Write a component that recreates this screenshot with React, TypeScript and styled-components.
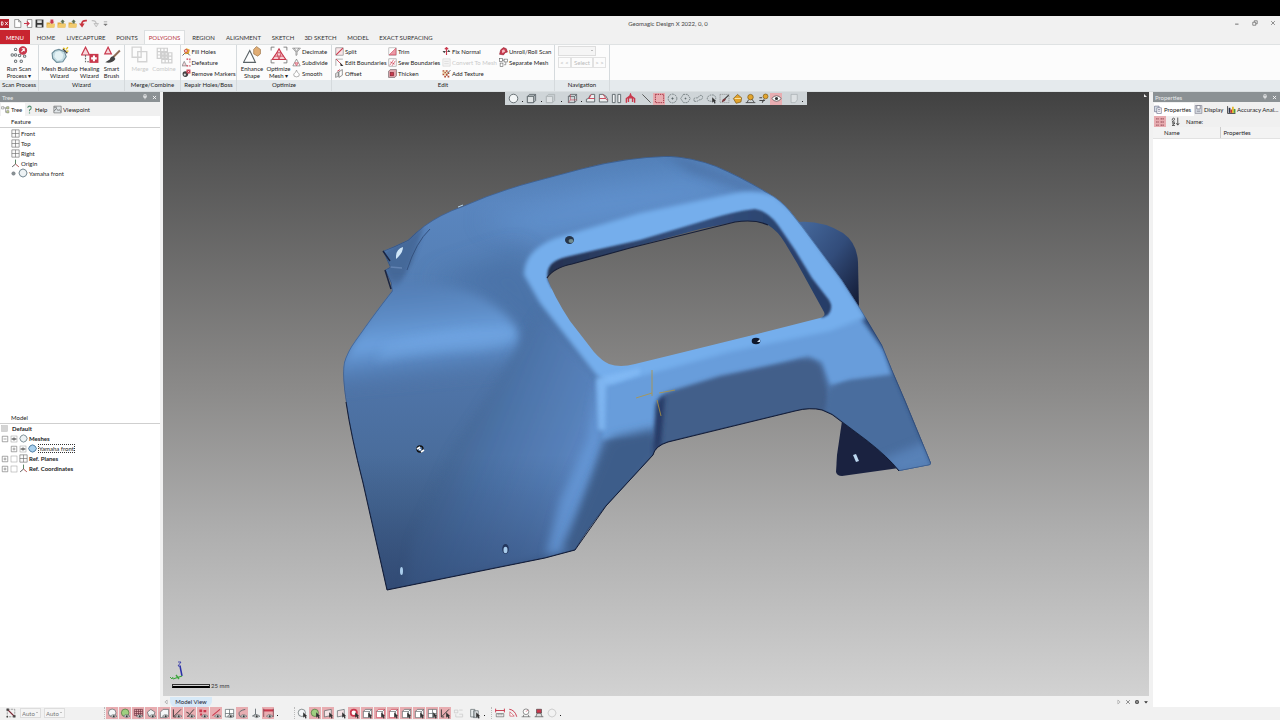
import React from 'react';
import styled, { createGlobalStyle } from 'styled-components';

const Global = createGlobalStyle`
  * { box-sizing: border-box; }
  body {
    margin: 0;
    background: #f1f1f1;
    color: #222;
    font-family: Lato, "Open Sans", sans-serif;
    font-size: 6px;
    line-height: 7px;
  }
  button, select { font: inherit; color: inherit; }
  button { border: 0; padding: 0; background: none; white-space: nowrap; }
`;

/* ---------- icons ---------- */

const G = '#5b6468';
const R = '#c9384c';

const eye = (
  <g>
    <path d="M5 12q4-4.500 9.500 0q-5 4-9.500 0z" fill="#f3f3f3" stroke={G} />
    <circle cx="9.800" cy="12" r="1.500" fill="#333" />
  </g>
);
const cursor = <path d="M9 6v8l2-1.500 1.500 3 1.500-1-1.300-2.500h2.300z" fill="#333" />;

const ART: Record<string, React.ReactNode> = {
  logo: (<g><rect x="0" y="0" width="16" height="16" fill="#b8202c" /><path d="M2.500 5v6h2q2.500-3 0-6zM9 5l5 6M14 5l-5 6" fill="none" stroke="#fff" strokeWidth="1.500" /></g>),
  file: <path d="M3 1h7l4 4v10H3zM10 1v4h4" fill="#fff" stroke="#555" />,
  import: (<g><path d="M6 1h8v14H6z" fill="#fff" stroke="#555" /><path d="M0 8h8M5 4.500l4 3.500-4 3.500" fill="none" stroke={R} strokeWidth="2" /></g>),
  save: (<g><path d="M1 1h14v14H1z" fill="#333" /><path d="M4 2h8v5H4zM4 10h8v4H4z" fill="#ddd" /></g>),
  folderRed: (<g><path d="M1 6h5l2 2h7v7H1z" fill="#e0aa3e" /><path d="M3 9h13l-2 6H1z" fill="#f2cb6d" /><path d="M8 1h5v4h2l-4.500 4L6 5h2z" fill={R} /></g>),
  folderGray: (<g><path d="M1 6h5l2 2h7v7H1z" fill="#e0aa3e" /><path d="M3 9h13l-2 6H1z" fill="#f2cb6d" /><path d="M6 5l4-4 4 4h-2v3H8V5z" fill="#5f7050" /></g>),
  undo: (<g><path d="M14 3Q5 2 5 9" fill="none" stroke="#c7343f" strokeWidth="3" /><path d="M0 8h10l-4.500 7z" fill="#c7343f" /></g>),
  redo: (<g><path d="M3 3Q11 2 11 9" fill="none" stroke="#bdbdbd" strokeWidth="2" /><path d="M7 8h8l-4 6z" fill="#e0e0e0" stroke="#aaa" /></g>),
  more: <path d="M5 5h6M5 9h6l-3 3z" fill="#777" stroke="#777" />,
  scan: (<g fill="#fff" stroke="#6d7478" strokeWidth=".9">
    <circle cx="2" cy="8" r="1.100" /><circle cx="5" cy="3" r="1.100" /><circle cx="5" cy="8" r="1.100" /><circle cx="8.500" cy="8.500" r="1.100" /><circle cx="5" cy="13.500" r="1.100" /><circle cx="10" cy="13.500" r="1.100" /><circle cx="13" cy="9" r="1.100" />
    <circle cx="11.500" cy="4" r="3.300" fill={R} stroke={R} /><path d="M10.200 5.500l2.500-3M10.500 2.500h2.200v2.200" fill="none" stroke="#fff" />
  </g>),
  buildup: (<g><path d="M7 3l5 2 1.500 4.500-3 4.500-5.500.5L1.500 11 1 6.500 3.500 4z" fill="#c3dbe2" stroke="#6c8c99" /><path d="M4 5.500l4-1 3 3-1 4-4 1.500-3-3.500z" fill="#e4f2f5" /><path d="M10.500 2.500l4 4" stroke="#444" strokeWidth="1.300" /><path d="M11 1.500l1.500 1.500M15 1l-1.500 2M15.500 4.500h-2" stroke="#e3bd20" strokeWidth="1.200" /></g>),
  healing: (<g><path d="M4 1l3.500 7H.5z" fill="#f7d8dc" stroke={R} /><path d="M4 8v6h4" fill="none" stroke="#666" strokeDasharray="1.500 1" /><rect x="7.500" y="7" width="8" height="8" fill={R} /><path d="M11.500 8.500v5M9 11h5" stroke="#fff" strokeWidth="1.800" /></g>),
  brush: (<g><path d="M4.500 1l3 6h-6z" fill="#f7d8dc" stroke={R} /><path d="M15 4l-6 6" stroke="#8d6b55" strokeWidth="1.800" /><path d="M9.500 9q-3 0-3.500 3l-4 2.500q6 1.500 9-3z" fill="#444" /></g>),
  merge: (<g fill="none" stroke="#d3d3d3" strokeWidth="1.200"><path d="M1 1h8v4h5v9H6v-4H1z" /><path d="M6 5h3v5H6z" /></g>),
  combine: (<path d="M2 2h9v9H2zM2 5h9M2 8h9M5 2v9M8 2v9M6 6h9v9H6zM6 9h9M6 12h9M9 6v9M12 6v9" fill="none" stroke="#d0d0d0" strokeWidth="1.100" />),
  fill: (<g><path d="M3 6l5-4 6 3-2 7-6 1z" fill="#e2a52e" /><circle cx="7" cy="7" r="2.500" fill="#fff" stroke={R} strokeWidth="1.500" /><path d="M1 15l4-4M10 11l4 4" stroke="#444" strokeWidth="1.500" /></g>),
  defeature: (<g><path d="M4 6l4 8H0z" fill="#f6d4d8" stroke={G} /><path d="M8 2h6v6M8 14h7" fill="none" stroke={R} strokeWidth="2" strokeDasharray="3 2" /></g>),
  markers: (<g><circle cx="6" cy="9" r="5" fill="#444" /><circle cx="5" cy="10" r="2" fill="#ddd" /><path d="M8 1h7v7H8z" fill={R} /><path d="M10 3l3 3M13 3l-3 3" stroke="#fff" /></g>),
  enhance: (<g><path d="M6 4l5 10.500H.5z" fill="#fff" stroke={G} /><path d="M9.500 3l2.500-2.500 3.500 2.500v4L13 9l-3.500-2z" fill="#e1ad74" stroke="#9a7145" strokeWidth=".6" /></g>),
  optimize: (<g><path d="M1 4V1h3M12 1h3v3M15 12v3h-3M4 15H1v-3" fill="none" stroke="#777" strokeWidth=".8" /><path d="M8 2.500l2 3.500 4 6H2l4-6z" fill="#f6ccd2" stroke={R} /><path d="M6 6h4l-2 6zM4 9h8" fill="none" stroke={R} strokeWidth=".7" /></g>),
  decimate: <path d="M1 2h14L9 9v5l-2 1V9zM4 2l4 6 4-6" fill="#f4f4f4" stroke="#666" />,
  subdivide: (<g><path d="M8 2l6.500 12h-13z" fill="#fff" stroke="#555" /><path d="M5 8.500h6L8 14z" fill="#f2bcc4" stroke={R} /></g>),
  smooth: <path d="M8 2q1 4 5 7 1 5-5 5t-5-5q4-3 5-7z" fill="#fff" stroke="#777" />,
  split: (<g><rect x="1.500" y="1.500" width="13" height="13" fill="#f8e6e8" stroke="#777" /><path d="M2 14L14 2" stroke={R} strokeWidth="1.800" /></g>),
  editB: (<g><path d="M1.500 14V2H14" fill="none" stroke="#777" /><path d="M2 2l10 10" stroke={R} strokeWidth="1.500" /><path d="M9 8l6 6h-5z" fill="#333" /></g>),
  offset: (<g><path d="M1 8l5-3v8l-5 2z" fill="#ddd" stroke="#666" /><path d="M7 5l6-4v10l-6 4z" fill="#fff" stroke="#444" /><path d="M4 4l5-3" stroke={R} strokeWidth="1.500" /></g>),
  trim: (<g><rect x="1.500" y="1.500" width="13" height="13" fill="#fff" stroke="#999" /><path d="M14 2v12H2z" fill="#eb9aa6" stroke={R} /></g>),
  sew: (<g><rect x="1.500" y="1.500" width="13" height="13" fill="#fff" stroke="#888" /><path d="M3 13L10 3M7 14l6-9M4 7l8 4" stroke={R} strokeWidth="1.200" /></g>),
  thicken: (<g><path d="M1 4l3-3h11v11l-3 3H1z" fill="#e2a5ad" stroke="#555" /><rect x="4" y="6" width="6" height="6" fill={R} stroke="#7d1d2b" /></g>),
  fix: (<g><path d="M8 1v13M5 4l3-3 3 3" fill="none" stroke={R} strokeWidth="2" /><path d="M1 7h6l-3 4zM9 9h6l-3-4z" fill="#444" /></g>),
  convert: <path d="M1.500 1.500h13v13h-13zM4 6h8M4 10h8" fill="#f4f4f4" stroke="#d0d0d0" />,
  texture: (<g><path d="M1 2h3v3H1zM7 2h3v3H7zM4 5h3v3H4zM10 6h3v3h-3zM1 8h3v3H1zM7 9h3v3H7zM4 12h3v3H4zM10 12h3v3h-3z" fill="#b04a36" /><path d="M4 2h3v3H4zM1 5h3v3H1zM7 6h3v3H7zM4 8h3v3H4z" fill="#edd5a0" /><path d="M9 8l6-6" stroke="#444" strokeWidth="1.500" /></g>),
  unroll: (<g><path d="M1 13l2-8 5-4 5 2 2 6-4 1-3 4z" fill={R} stroke="#8d2230" /><path d="M5 6l4-2 2 4-5 3z" fill="#f3bcc3" /></g>),
  separate: (<g fill="#fff" stroke="#555"><rect x="1" y="1" width="5" height="5" /><rect x="9" y="2" width="6" height="5" /><rect x="2" y="9" width="5" height="6" /><path d="M6 4h3M9 12h3V7" /></g>),
  sphere: <circle cx="8" cy="8" r="6.200" fill="#f3f6f7" stroke={G} strokeWidth="1.300" />,
  mesh: <path d="M8 1.500l4.500 2 2 4.500-2 4.500-4.500 2-4.500-2-2-4.500 2-4.500z" fill="#eef3f5" stroke="#5f7580" strokeWidth="1.400" />,
  meshBlue: <path d="M8 1.500l4.500 2 2.500 4.500-2.500 4.500-4.500 2-4.500-2L1 8l2.500-4.500z" fill="#a9d0ee" stroke="#396c95" strokeWidth="1.500" />,
  cube: (<g stroke={G} strokeWidth="1.200"><path d="M2 5l3-3h9v9l-3 3H2z" fill="#a9b0b4" /><path d="M2 5h9v9H2z" fill="#dfe3e4" /><path d="M11 5l3-3" /></g>),
  cubeGray: (<g stroke="#aab0b3" strokeWidth="1.200"><path d="M2 5l3-3h9v9l-3 3H2z" fill="#c9cfd2" /><path d="M2 5h9v9H2z" fill="#dfe3e5" /></g>),
  cubeRed: (<g fill="none" stroke={G} strokeWidth="1.200"><path d="M2 5l3-3h9v9l-3 3H2zM2 5h9v9M11 5l3-3" /><path d="M5 2v8h9M5 10l-3 4" stroke={R} strokeWidth=".8" /></g>),
  halfL: (<g fill="none" strokeWidth="1.300"><path d="M2 13h12V2H9Q7 3 5 8L2 9z" fill="#eceff0" stroke={G} /><path d="M5 8h9M9 2L6 8" stroke={R} /></g>),
  halfR: (<g fill="none" strokeWidth="1.300"><path d="M2 13h12V9q-2-6-7-7H2z" fill="#eceff0" stroke={G} /><path d="M2 8h9q1 2 3 2M7 2q3 2 4 6" stroke={R} /></g>),
  pair: <path d="M2 2h4v12H2zM10 2h4v12h-4z" fill="#f2f4f5" stroke={G} strokeWidth="1.300" />,
  people: (<g fill="none" stroke={R} strokeWidth="2"><path d="M2 14V8l3-2v7M14 14V8l-3-2v7" /><path d="M6 7l2-5 2 5z" fill={R} /></g>),
  line: <path d="M2 2l12 12" stroke="#444" strokeWidth="1.200" />,
  rectSel: <path d="M2 2h12v12H2z" fill="none" stroke="#9c2638" strokeWidth="1.300" strokeDasharray="2 1.300" />,
  circleSel: (<g fill="none" stroke={G}><circle cx="8" cy="8" r="6.300" strokeDasharray="3 1" /><circle cx="8" cy="8" r="1" fill={G} /></g>),
  polySel: (<g fill="none" stroke={G}><path d="M5 2h6l4 6-4 6H5L1 8z" strokeDasharray="2.500 1" /><circle cx="8" cy="8" r=".8" fill={G} /></g>),
  lasso: <path d="M2 12q-2-5 2-5 4 1 5-3 5-2 5 3-1 3-5 3-3 3-7 2z" fill="none" stroke={G} strokeDasharray="2.500 1" />,
  lasso2: (<g><path d="M8 12q-7 0-6-5 2-5 9-4 4 2 3 6" fill="none" stroke={G} strokeDasharray="2.500 1" />{cursor}</g>),
  paint: (<g><path d="M1.500 2h13v12h-13z" fill="none" stroke="#888" strokeDasharray="2 1" /><path d="M14 3L8 9" stroke="#333" strokeWidth="1.500" /><path d="M9 8q-4 0-5 5 4 1 6-4z" fill="#7a3a3e" /></g>),
  bucket: (<g><path d="M2 8l6-6 6 5-1 6-7 2z" fill="#e0a22b" stroke="#7c5714" /><path d="M4 8h9" stroke="#fae0a0" strokeWidth="1.500" /></g>),
  stamp: (<g><circle cx="8" cy="6" r="4" fill="#e2a52e" stroke="#7c5714" /><path d="M1 14h14M5 10l-2 4M10 9l3 4" stroke="#444" strokeWidth="1.300" /></g>),
  wand: (<g><circle cx="11" cy="5" r="3.500" fill="#e2a52e" stroke="#7c5714" /><path d="M2 7h4M2 11h8M6 14l3-5" stroke="#444" strokeWidth="1.500" /></g>),
  eye: (<g><path d="M1 8q7-8 14 0q-7 8-14 0z" fill="#fff" stroke="#444" /><circle cx="8" cy="8" r="2.300" fill="#333" /></g>),
  page: <path d="M3 2h9v8l-3 4H3z" fill="#dde1e3" stroke="#a5acaf" />,
  plane: <path d="M1.500 1.500h13v13h-13zM8 1.500v13M1.500 8h13" fill="#fafafa" stroke="#6c6c6c" strokeWidth="1.100" />,
  origin: (<g fill="none" strokeWidth="1.500"><path d="M8 9V1" stroke="#3b6f4a" /><path d="M8 9l-6 5" stroke="#444" /><path d="M8 9l6 5" stroke="#a23a3a" /></g>),
  tree: (<g fill="#fff" stroke="#777"><path d="M1 3h4v4H1z" /><path d="M5 5h3v8h2M8 5h2" fill="none" /><path d="M10 3h4v4h-4zM10 10h4v4h-4z" fill="#cbdc8c" /></g>),
  help: (<g><path d="M5 5q0-3 3-3t3 3-3 4v2" fill="none" stroke="#4f8b6c" strokeWidth="1.800" /><circle cx="8" cy="14" r="1.200" fill="#4d9a76" /></g>),
  view: (<g><path d="M1.500 2h13v12h-13z" fill="#dfe4e7" stroke="#555" /><path d="M2 11l4-5 3 4 2-2 3 4M2 4h5" stroke="#444" fill="none" /></g>),
  props: (<g><path d="M1 2h8v10H1z" fill="#dae5ea" stroke="#557" /><path d="M5 5h8v10H5z" fill="#fff" stroke="#557" /><path d="M7 8h4M7 11h4" stroke="#557" /></g>),
  display: (<g><path d="M2 1h12v14H2z" fill="#d5dae2" stroke="#778" /><path d="M5 1h6v6H5zM5 11h6" fill="#fff" stroke="#556" /></g>),
  accuracy: (<g><path d="M1 2v13h14" fill="none" stroke="#333" strokeWidth="1.500" /><path d="M3 5h3v9H3z" fill="#28324a" /><path d="M6 8h3v6H6z" fill="#c6332e" /><path d="M9 3h3v11H9z" fill="#e6b520" /><path d="M12 7h3v7h-3z" fill="#4c9b3c" /></g>),
  categories: <path d="M2 3h4M2 8h4M2 13h4M9 3h5M9 8h5M9 13h5" stroke="#7a2836" strokeWidth="1.500" strokeDasharray="2 1" />,
  sort: (<g fill="none" stroke="#333" strokeWidth="1.400"><path d="M2 6q0-4 2.500-4T6 5L2 9h5M2 11h5l-5 4h5" /><path d="M12 1v13M9.500 11l2.500 3.500 2.500-3.500" /></g>),
  sphereEye: (<g><circle cx="7.500" cy="7" r="5.500" fill="#f5f7f8" stroke={G} />{eye}</g>),
  greenEye: (<g><circle cx="7.500" cy="7" r="5.500" fill="#9fcf80" stroke="#49713a" />{eye}</g>),
  gridEye: (<g><path d="M2 2h12v9H2zM2 5h12M2 8h12M5 2v9M8 2v9M11 2v9" fill="none" stroke="#6e3340" />{eye}</g>),
  polyEye: (<g><path d="M7 2l6 4-2 6H4L2 6z" fill="#eef1f2" stroke={G} />{eye}</g>),
  solidEye: (<g><path d="M2 6l4-4h8v8l-3 4H2z" fill="#f5f7f8" stroke={G} />{eye}</g>),
  sketchEye: (<g><path d="M2 2v11h4M3 12L13 2" fill="none" stroke="#333" strokeWidth="1.300" />{eye}</g>),
  sketch3Eye: (<g><path d="M13 2L5 11M2 6l4 2M3 12h5" fill="none" stroke="#333" strokeWidth="1.300" />{eye}</g>),
  pointEye: (<g><path d="M2 2h4v4H2zM8 3h4v3H8zM3 8h3v3H3z" fill={R} />{eye}</g>),
  lineEye: (<g><path d="M2 11L13 2" stroke={R} strokeWidth="1.500" />{eye}</g>),
  planeEye: (<g><path d="M2 2h12v11H2zM8 2v11M2 8h12" fill="#fff" stroke={G} />{eye}</g>),
  curveEye: (<g><path d="M12 2Q2 4 3 9t4 4" fill="none" stroke={G} strokeWidth="1.300" />{eye}</g>),
  coordEye: (<g><path d="M8 1v8l-5 3M8 9l5 3" fill="none" stroke={G} strokeWidth="1.200" />{eye}</g>),
  dimEye: (<g><path d="M1 2h14v3H1z" fill={R} /><path d="M1 1v12M15 1v12" stroke="#6e3340" />{eye}</g>),
  sphereCur: (<g><circle cx="7" cy="7" r="5.300" fill="#f5f7f8" stroke={G} />{cursor}</g>),
  greenCur: (<g><circle cx="7" cy="7" r="5.300" fill="#9fcf80" stroke="#49713a" />{cursor}</g>),
  faceCur: (<g><path d="M2 4l10-2v9L2 13z" fill="#f4e4e6" stroke={G} />{cursor}</g>),
  redCur: (<g><circle cx="7" cy="7" r="4.500" fill="#fff" stroke={R} strokeWidth="2.500" />{cursor}</g>),
  boxCur: (<g><path d="M2 5l3-3h9v9l-3 3H2z" fill="#fff" stroke={G} /><path d="M2 5h9v9M11 5l3-3" fill="none" stroke={G} />{cursor}</g>),
  boxRedCur: (<g><path d="M2 5l3-3h9v9l-3 3H2z" fill="#fff" stroke={R} /><path d="M2 5h9v9M11 5l3-3" fill="none" stroke={G} />{cursor}</g>),
  planeCur: (<g><path d="M2 2h12v12H2zM8 2v12M2 8h12" fill="#fff" stroke={G} />{cursor}</g>),
  sketchCur: (<g><path d="M2 2v11h4M3 12L13 2" fill="none" stroke="#333" strokeWidth="1.300" />{cursor}</g>),
  grayCur: <path d="M2 3h5v4H2zM9 3h5M9 9h5v4H4V9" fill="none" stroke="#c7c7c7" />,
  copyCur: (<g><path d="M1 2h6v11H1zM5 4h7v10H5z" fill="#edf1f2" stroke={G} />{cursor}</g>),
  dist: (<g><path d="M1 4h14M1 1v6M15 1v6" stroke={R} strokeWidth="1.500" /><path d="M2 9h12v5H2zM5 9v3M8 9v3M11 9v3" fill="#fff" stroke="#555" /></g>),
  angle: (<g><path d="M2 2q9 1 12 12" fill="none" stroke={R} strokeWidth="1.500" /><path d="M3 6v7h7z" fill="#fff" stroke={R} /></g>),
  radius: (<g><circle cx="8" cy="6" r="4.500" fill="#fff" stroke="#555" /><path d="M8 6l3-3" stroke={R} /><path d="M1 14h14M4 11v3M12 11v3" stroke="#555" /></g>),
  section: (<g><path d="M1 14h14M3 14l2-6h6l2 6" fill="#ddd" stroke="#444" /><path d="M4 2h8v6H4z" fill={R} stroke="#444" /></g>),
  ring: <path d="M8 1.500l4.500 2 2 4.500-2 4.500-4.500 2-4.500-2-2-4.500 2-4.500z" fill="#f2f2f2" stroke="#c4c4c4" strokeWidth="1.300" />,
  filter: (<g><path d="M3 3v10h10V3z" fill="none" stroke="#888" strokeDasharray="3 1" /><path d="M3 3l10 10" fill="none" stroke="#7d2b38" strokeWidth="1.500" /><path d="M2 2h3v3H2zM11 11h3v3h-3zM2 12h2v2H2z" fill="#444" /></g>),
  check: <rect x="2" y="2" width="12" height="12" fill="#fff" stroke="#999" />,
  checkEye: (<g><rect x="2" y="2" width="12" height="12" fill="#fff" stroke="#999" /><path d="M3 8q5-5 10 0q-5 5-10 0z" fill="#ddd" stroke="#444" /><circle cx="8" cy="8" r="1.500" fill="#222" /></g>),
  block: <rect x="1" y="1" width="14" height="14" fill="#d4d4d4" stroke="#bbb" />,
  plus: <path d="M2.500 2.500h11v11h-11zM5 8h6M8 5v6" fill="#fff" stroke="#777" strokeWidth="1.300" />,
  minus: <path d="M2.500 2.500h11v11h-11zM5 8h6" fill="#fff" stroke="#777" strokeWidth="1.300" />,
  dot: <circle cx="8" cy="8" r="4" fill="#8a9494" stroke="#667" />,
  blank: null,
  pin: <path d="M5 2h6v6H5zM3 8h10M8 8v6" fill="none" stroke="#fff" strokeWidth="1.700" />,
  close: <path d="M3 3l10 10M13 3L3 13" stroke="#fff" strokeWidth="2.600" />,
  thinClose: <path d="M3 3l10 10M13 3L3 13" stroke="#444" strokeWidth="1.500" />,
  min: <path d="M3 11h9" stroke="#444" strokeWidth="2" />,
  restore: <path d="M2 6h8v8H2zM6 6V2h8v8h-4" fill="none" stroke="#444" strokeWidth="1.500" />,
  left: <path d="M11 3v10L5 8z" fill="#fff" stroke="#555" />,
  right: <path d="M5 3v10l6-5z" fill="#fff" stroke="#555" />,
  down: <path d="M3 6h10l-5 6z" fill="#333" />,
  disc: (<g><circle cx="8" cy="8" r="5.500" fill="#444" /><path d="M5 8h6" stroke="#fff" strokeWidth="2" /></g>),
};

const Svg = styled.svg<{ $s: number }>`
  display: block;
  flex: none;
  width: ${(p) => p.$s}px;
  height: ${(p) => p.$s}px;
`;
const Icon = ({ n, s = 9 }: { n: string; s?: number }) => (
  <Svg $s={s} viewBox="0 0 16 16" aria-hidden="true">{ART[n]}</Svg>
);

/* ---------- frame ---------- */

const Shell = styled.div`
  display: flex;
  flex-direction: column;
  min-height: 100vh;
  border-top: 16px solid #000;
`;
const TitleBar = styled.header`
  display: grid;
  grid-template-columns: 1fr auto 1fr;
  align-items: center;
  height: 14px;
  padding: 0 4px 0 0;
`;
const QuickAccess = styled.div`
  display: flex;
  gap: 2px;
  button:first-child { margin-right: 2px; }
`;
const Title = styled.h1`
  margin: 0 0 0 60px;
  font-size: 6px;
  font-weight: 400;
  color: #444;
`;
const WindowButtons = styled.div`
  display: flex;
  justify-content: flex-end;
  gap: 12px;
`;

const TabStrip = styled.nav`
  display: flex;
  height: 14px;
`;
const Tab = styled.button<{ $kind?: 'menu' | 'active'; $w: number }>`
  width: ${(p) => p.$w}px;
  color: ${(p) => (p.$kind === 'menu' ? '#fff' : p.$kind === 'active' ? '#b8323e' : '#333')};
  background: ${(p) => (p.$kind === 'menu' ? '#c8242f' : p.$kind === 'active' ? '#fcfcfc' : 'none')};
  border: ${(p) => (p.$kind === 'active' ? '1px solid #dcdfe0' : '0')};
  border-bottom: 0;
`;

const Ribbon = styled.div`
  display: flex;
  height: 47px;
  border-top: 1px solid #dfe2e3;
  background: linear-gradient(#fcfcfc 35px, #e5eaed 35px);
`;
const Group = styled.section<{ $w: number }>`
  display: flex;
  flex-direction: column;
  width: ${(p) => p.$w}px;
  border-right: 1px solid #d5dadd;
`;
const GroupBody = styled.div`
  display: flex;
  justify-content: center;
  height: 35px;
  padding-top: 1px;
`;
const GroupLabel = styled.h2`
  margin: 0;
  height: 9px;
  line-height: 9px;
  font-size: 6px;
  font-weight: 400;
  text-align: center;
  white-space: nowrap;
`;
const BigButton = styled.button<{ $w: number }>`
  display: flex;
  flex-direction: column;
  align-items: center;
  width: ${(p) => p.$w}px;
  height: 33px;
  gap: 1px;
  &:disabled { color: #c9c9c9; }
`;
const Stack = styled.div<{ $w: number }>`
  width: ${(p) => p.$w}px;
`;
const SmallButton = styled.button`
  display: flex;
  align-items: center;
  gap: 1px;
  height: 11px;
  &:disabled { color: #cacaca; }
`;

const Nav = styled.div`
  display: flex;
  flex-direction: column;
  gap: 1px;
  width: 48px;
`;
const Picker = styled.span<{ $w: number }>`
  display: flex;
  align-items: center;
  width: ${(p) => p.$w}px;
  height: 10px;
  border: 1px solid #ddd;
  background: #f5f5f5;
  color: #777;
  select {
    flex: 1;
    min-width: 0;
    padding: 0 0 0 1px;
    border: 0;
    background: none;
    appearance: none;
  }
  &::after {
    content: "";
    margin-right: 2px;
    border: 1px solid transparent;
    border-top-color: #888;
  }
`;
const NavRow = styled.div`
  display: flex;
`;
const NavButton = styled.button<{ $w: number }>`
  width: ${(p) => p.$w}px;
  height: 11px;
  border: 1px solid #e2e2e2;
  &:disabled { color: #bbb; }
`;

/* ---------- docks ---------- */

const Work = styled.main`
  display: flex;
  flex: 1;
  border-top: 1px solid #dadfe1;
`;
const Dock = styled.aside<{ $w: number }>`
  display: flex;
  flex-direction: column;
  flex: none;
  width: ${(p) => p.$w}px;
  background: #fff;
`;
const DockTitle = styled.div`
  display: flex;
  align-items: center;
  gap: 4px;
  height: 10px;
  padding: 0 3px 0 2px;
  background: #8b9194;
  color: #e8eaeb;
`;
const DockName = styled.span`
  flex: 1;
`;
const DockTabs = styled.div`
  display: flex;
  height: 14px;
  padding: 1px 0 0 1px;
  background: #f0f0f0;
`;
const DockTab = styled.button<{ $on?: boolean; $w: number }>`
  display: flex;
  align-items: center;
  gap: 1px;
  width: ${(p) => p.$w}px;
  background: ${(p) => (p.$on ? '#fff' : 'none')};
`;
const TreeSection = styled.section`
  flex: 1 1 0;
`;
const TreeHead = styled.h3`
  margin: 0;
  height: 12px;
  padding-left: 11px;
  border-bottom: 1px solid #cfcfcf;
  font-size: 6px;
  font-weight: 400;
  line-height: 11px;
`;
const List = styled.ul`
  margin: 0;
  padding: 0;
  list-style: none;
`;
const Row = styled.li<{ $in: number; $bold?: boolean }>`
  display: flex;
  align-items: center;
  gap: 1px;
  height: 10px;
  padding-left: ${(p) => p.$in}px;
  font-weight: ${(p) => (p.$bold ? 700 : 400)};
`;
const Selected = styled.span`
  border: 1px dotted #333;
`;
const PropsBar = styled.div`
  display: flex;
  align-items: center;
  gap: 3px;
  height: 11px;
  padding-left: 1px;
  background: #f0f0f0;
`;
const PropName = styled.span`
  margin-left: 3px;
`;
const PropTable = styled.table`
  width: 100%;
  border-collapse: collapse;
  background: #f3f3f3;
  th {
    height: 11px;
    padding: 0 0 0 11px;
    border-bottom: 1px solid #e2e2e2;
    font-weight: 400;
    text-align: left;
  }
  th + th { padding-left: 3px; border-left: 1px solid #ccc; width: 60px; }
`;

/* ---------- centre ---------- */

const Centre = styled.div`
  display: flex;
  flex-direction: column;
  flex: 1;
  min-width: 0;
  margin: 0 4px 0 3px;
`;
const Viewport = styled.div`
  position: relative;
  flex: 1;
  min-height: 300px;
  overflow: hidden;
  background: linear-gradient(#414141, #535353 10%, #8b8a89 49%, #adadad 72%, #d2d2d2);
`;
const Scene = styled.svg`
  position: absolute;
  inset: 0;
  width: 100%;
  height: 100%;
`;
const FloatBar = styled.div`
  position: absolute;
  top: 0;
  left: 50%;
  transform: translateX(-50%);
  display: flex;
  align-items: center;
  width: 302px;
  height: 13px;
  padding-left: 2px;
  background: #cfd5d8;
`;
const Corner = styled.div`
  position: absolute;
  top: 2px;
  right: 2px;
  border-left: 3px solid #eee;
  border-top: 3px solid transparent;
`;
const Scale = styled.div`
  position: absolute;
  left: 9px;
  bottom: 7px;
  display: flex;
  align-items: center;
  gap: 1px;
  color: #333;
`;
const ScaleBar = styled.div`
  width: 38px;
  height: 4px;
  border: 1px solid #333;
  border-bottom: 2px solid #000;
`;
const ViewTabs = styled.div`
  display: flex;
  align-items: center;
  height: 11px;
  gap: 3px;
  color: #223;
`;
const ViewTab = styled.button`
  height: 10px;
  width: 42px;
  margin-left: -2px;
  background: #d7e9f7;
  border-radius: 0 0 6px 6px;
`;
const Spacer = styled.div`
  flex: 1;
`;

/* ---------- tool buttons ---------- */

const Tool = styled.button<{ $on?: boolean; $w?: number }>`
  display: flex;
  align-items: center;
  justify-content: center;
  flex: none;
  width: ${(p) => p.$w ?? 13}px;
  height: 12px;
  background: ${(p) => (p.$on ? '#e8adb1' : 'none')};
  background-clip: padding-box;
  border-right: ${(p) => (p.$on ? '1px solid transparent' : '0')};
`;
const MoreTool = styled(Tool)`
  align-items: flex-end;
  padding-bottom: 3px;
  &::after {
    content: "";
    width: 1px;
    height: 1px;
    background: #222;
  }
`;
const Status = styled.footer`
  display: flex;
  align-items: center;
  height: 13px;
  padding: 0 0 1px 5px;
`;
const StatusSet = styled.div<{ $w: number }>`
  display: flex;
  align-items: center;
  width: ${(p) => p.$w}px;
  gap: 3px;
`;
const Tools = styled.div<{ $w: number }>`
  display: flex;
  width: ${(p) => p.$w}px;
  padding-left: 1px;
  border-left: 1px dotted #bbb;
`;

const Small = ({ n, label, disabled }: { n: string; label: string; disabled?: boolean }) => (
  <SmallButton disabled={disabled}><Icon n={n} />{label}</SmallButton>
);
const Big = ({ n, a, b, w, disabled }: { n: string; a: string; b?: string; w: number; disabled?: boolean }) => (
  <BigButton $w={w} disabled={disabled}>
    <Icon n={n} s={18} />
    <span>{a}{b && <><br />{b}</>}</span>
  </BigButton>
);

const TABS: [string, number][] = [
  ['HOME', 32], ['LIVECAPTURE', 48], ['POINTS', 34], ['POLYGONS', 41], ['REGION', 37], ['ALIGNMENT', 43],
  ['SKETCH', 36], ['3D SKETCH', 39], ['MODEL', 36], ['EXACT SURFACING', 60],
];
const QUICK = ['logo', 'file', 'import', 'save', 'folderRed', 'folderGray', 'folderGray', 'undo', 'redo', 'more'];

const FLOAT: [string, number, boolean?][] = [
  ['sphere', 13], ['.', 5], ['cube', 13], ['.', 6], ['cubeGray', 13], ['.', 9], ['cubeRed', 13], ['.', 5],
  ['halfL', 13], ['halfR', 13], ['pair', 13], ['people', 14], ['blank', 3], ['line', 13], ['rectSel', 13, true],
  ['circleSel', 13], ['polySel', 13], ['lasso', 13], ['lasso2', 13], ['paint', 13], ['bucket', 13], ['stamp', 13],
  ['wand', 13], ['eye', 13, true], ['blank', 5], ['page', 12], ['.', 5],
];
const SHOW: [string, boolean][] = [
  ['sphereEye', true], ['greenEye', true], ['gridEye', true], ['polyEye', true], ['solidEye', true], ['sketchEye', true],
  ['sketch3Eye', true], ['pointEye', true], ['lineEye', true], ['planeEye', false], ['curveEye', true],
  ['coordEye', false], ['dimEye', true],
];
const PICK: [string, boolean][] = [
  ['sphereCur', false], ['greenCur', true], ['faceCur', true], ['faceCur', false], ['redCur', true], ['boxCur', true],
  ['boxRedCur', true], ['boxRedCur', true], ['boxCur', true], ['boxCur', true], ['planeCur', true], ['sketchCur', true],
  ['grayCur', false],
];

const BODY =
  'M387 590 L363 483 Q351 436 346 402 Q342 378 344 363 Q347 352 355 341 L370 320 Q384 301 392 291 L391 283 L385 270 L390 267 L383 251 L395 246 L408 240 Q415 233 424 226 Q440 214 463 206 Q497 191 535 181 L580 169 Q625 157 668 156 Q692 157 716 166 Q744 178 768 193 Q781 200 790 211 L802 226 L842 280 L860 308 L882 345 L893 372 L905 400 L931 463 L930 465 L899 471 Q888 457 866 440 L842 422 Q832 413 822 410 Q810 407 795 411 L700 434 L668 442 Q655 446 653 455 L630 480 L606 506 Q587 530 575 550 L545 558 L387 590 Z';
const HOLE =
  'M547 277 Q553 268 572 264 L630 248 L700 229 L735 222 Q755 219 768 225 Q778 231 785 243 L797 263 L824 312 Q826 316 820 318 L753 335 L680 353 L635 364 Q620 368 609 364 Q602 361 594 352 L570 321 Q553 295 547 277 Z';
const LIP =
  'M548 280 Q544 262 566 257 L600 249 L640 240 L700 222 Q735 211 755 209 Q768 211 778 225 L795 250 L812 278 L829 300 Q834 308 828 315 L822 318 L797 275 L765 235 L700 240 L565 282 L552 288 Z';
const RIM =
  'M524 275 Q524 250 556 238 L640 213 L735 193 Q760 189 775 196 L795 214 L842 280 L866 318 L830 331 L730 352 L612 384 L597 376 L540 303 Z';

const Part = () => (
  <Scene viewBox="163 92 986 604" role="img" aria-label="Yamaha front mesh">
    <defs>
      <clipPath id="body"><path d={BODY} /></clipPath>
      <mask id="cut"><rect x="163" y="92" width="986" height="604" fill="#fff" /><path d={HOLE} fill="#000" /></mask>
      <linearGradient id="base" x1="0" y1="0" x2="0" y2="1">
        <stop offset="0" stopColor="#5280b8" /><stop offset=".12" stopColor="#5a86bf" /><stop offset=".3" stopColor="#547eb4" />
        <stop offset=".55" stopColor="#4e73a6" /><stop offset=".8" stopColor="#466894" /><stop offset="1" stopColor="#3b567f" />
      </linearGradient>
      <linearGradient id="flap" x1="0" y1="0" x2=".9" y2="1">
        <stop offset="0" stopColor="#466a9e" /><stop offset=".5" stopColor="#324c7a" /><stop offset="1" stopColor="#131b35" />
      </linearGradient>
      <linearGradient id="bump" gradientUnits="userSpaceOnUse" x1="440" y1="288" x2="450" y2="385">
        <stop offset="0" stopColor="#5580b8" /><stop offset=".25" stopColor="#5d8cc6" /><stop offset=".52" stopColor="#6ba0de" /><stop offset=".7" stopColor="#5a88c2" /><stop offset="1" stopColor="#4d75aa" stopOpacity="0" />
      </linearGradient>
      <linearGradient id="side" gradientUnits="userSpaceOnUse" x1="440" y1="445" x2="580" y2="500">
        <stop offset="0" stopColor="#42648f" /><stop offset=".35" stopColor="#4d74a9" /><stop offset=".75" stopColor="#5983bd" /><stop offset="1" stopColor="#6090ce" />
      </linearGradient>
      <linearGradient id="low" x1="0" y1="0" x2="0" y2="1">
        <stop offset="0" stopColor="#2c446e" stopOpacity="0" /><stop offset="1" stopColor="#2c446e" stopOpacity=".7" />
      </linearGradient>
      <linearGradient id="lip" x1="0" y1="0" x2="1" y2="0">
        <stop offset="0" stopColor="#24304f" /><stop offset=".5" stopColor="#34507e" /><stop offset="1" stopColor="#263c66" />
      </linearGradient>
      <filter id="b1" x="-20%" y="-20%" width="140%" height="140%"><feGaussianBlur stdDeviation="1" /></filter>
      <filter id="b2" x="-50%" y="-20%" width="200%" height="140%"><feGaussianBlur stdDeviation="2" /></filter>
      <filter id="b5" x="-40%" y="-40%" width="180%" height="180%"><feGaussianBlur stdDeviation="5" /></filter>
      <filter id="b12" x="-60%" y="-60%" width="220%" height="220%"><feGaussianBlur stdDeviation="12" /></filter>
    </defs>
    <path d="M798 222 Q822 220 843 233 Q857 243 858 262 L859 310 Z" fill="url(#flap)" />
    <path d="M842 421 L837 455 L836 472 Q837 476 842 476 L899 468 L880 445 Z" fill="#1a2240" />
    <path d="M853 455l3-1 3 7-3 1z" fill="#bcd8f0" />
    <g mask="url(#cut)">
      <g clipPath="url(#body)">
        <rect x="340" y="150" width="600" height="445" fill="url(#base)" />
        <path d="M540 240 L760 195 L690 172 L600 185 L480 220 Z" fill="#6496d4" opacity=".6" filter="url(#b12)" />
        <path d="M660 150 L790 200 L740 188 L690 172 Z" fill="#47699b" opacity=".6" filter="url(#b5)" />
        <path d="M380 255 L424 226 L412 262 L394 295 Z" fill="#426392" opacity=".8" filter="url(#b2)" />
        <path d="M430 280 Q500 290 530 350 L600 400 L570 330 L520 250Z" fill="#4a71a6" opacity=".8" filter="url(#b12)" />
        <path d="M330 380 L388 284 Q455 280 490 303 Q524 325 520 350 Q510 372 470 400 L340 400 Z" fill="url(#bump)" filter="url(#b5)" />
        <path d="M385 345 Q450 325 512 330 Q520 345 480 350 Q420 352 375 362 Z" fill="#76abe8" opacity=".4" filter="url(#b5)" />
        <path d="M500 376 L540 310 L600 380 L603 440 L560 556 L404 592 L412 540 L452 450 Z" fill="url(#side)" opacity=".85" filter="url(#b5)" />
        <path d="M340 455 L590 455 L590 600 L340 600 Z" fill="url(#low)" />
        <path d="M598 376 L602 440 L572 550 L546 555 L560 500 L588 440 Z" fill="#6699d8" opacity=".8" filter="url(#b5)" />
        <path d="M597 380 L720 350 L860 318 L885 350 L892 378 L830 385 L822 362 L808 356 L665 395 L655 440 L602 440 Z" fill="#679ddb" filter="url(#b2)" />
        <path d="M604 450 Q608 437 620 436 L656 428 L660 455 L578 560 L562 548 Q585 500 604 450 Z" fill="#3e5d8a" filter="url(#b5)" />
        <path d="M655 452 L658 402 Q661 393 675 390 L720 376 L800 360 Q816 358 821 368 L827 390 L832 420 L800 414 Z" fill="#425f8a" filter="url(#b2)" />
        <path d="M653 456 L656 405 Q660 396 665 396 L661 445 Z" fill="#253a66" filter="url(#b2)" />
        <path d="M829 392 Q835 384 850 380 L896 374 L940 466 L900 480 L824 414 Z" fill="#4a6d9e" filter="url(#b2)" />
        <path d="M880 460 L930 440 L935 470 L898 475 Z" fill="#5e8ac2" opacity=".7" filter="url(#b5)" />
        <path d="M864 316 L886 348 L935 464" fill="none" stroke="#28416e" strokeWidth="5" filter="url(#b2)" />
        <path d={RIM} fill="#74aeec" filter="url(#b2)" />
        <path d="M596 378 L640 368 L640 374 L606 386 L605 430 L598 430 Z" fill="#84bbf6" opacity=".8" filter="url(#b2)" />
        <path d={LIP} fill="url(#lip)" filter="url(#b1)" />
        <path d="M430 229 Q416 242 407 270" fill="none" stroke="#35527f" strokeWidth="1" />
        <path d="M390 267 L402 268" fill="none" stroke="#6283b2" strokeWidth="1.500" />
        <path d={BODY} fill="none" stroke="#1c2b4e" strokeWidth="1.400" opacity=".4" />
      </g>
    </g>
    <path d="M547 278 Q553 268 572 264 L630 248 L735 222 Q755 219 768 225" fill="none" stroke="#171f38" strokeWidth="1.200" />
    <path d="M575 550 L545 558 L387 590 L363 483 Q351 436 346 402" fill="none" stroke="#131c36" strokeWidth="1" />
    <path d="M899 471 Q888 457 866 440 L842 422 Q832 413 822 410 Q810 407 795 411 L668 442 Q655 446 653 455 L606 506 L575 550" fill="none" stroke="#131c36" strokeWidth="1" />
    <path d="M383 251 L390 261 M385 270 L391 289" stroke="#1a2440" strokeWidth="1.500" />
    <path d="M396 257 Q396 249 403 247 Q403 253 396 259 Z" fill="#cfe6f8" />
    <path d="M458 207l5-2" stroke="#b9d8ef" />
    <ellipse cx="569.500" cy="240" rx="4.500" ry="4" fill="#263449" /><ellipse cx="571" cy="241" rx="2.500" ry="2" fill="#708c90" />
    <ellipse cx="756" cy="341" rx="4.300" ry="3.300" fill="#10182c" /><path d="M757 342l3-3v3z" fill="#cfe0ee" />
    <ellipse cx="505.500" cy="549" rx="3.300" ry="5" fill="#23365c" /><ellipse cx="505.500" cy="550" rx="2" ry="3.300" fill="#a9cdec" />
    <ellipse cx="401.500" cy="571" rx="1.500" ry="4" fill="#a9cdec" />
    <path d="M652 370V396M636 398L652 393M659 393L675 390M657 400L661 416" stroke="#b3963f" strokeWidth=".8" fill="none" />
    <circle cx="420" cy="449" r="3" fill="none" stroke="#111" strokeWidth="1.300" /><path d="M417 449l3-2M421 452l3-2M419 449.500h2" stroke="#fff" strokeWidth="1.600" />
    <path d="M182 676L180 666" stroke="#2a2fa8" strokeWidth="1.500" /><path d="M178 662h3l-3 4h3" fill="none" stroke="#2a2fa8" strokeWidth=".8" />
    <path d="M182 676L173 679M176 675l3 4" stroke="#3ba53b" strokeWidth="1.300" /><path d="M170 677l2 2 1-2" stroke="#3ba53b" fill="none" />
  </Scene>
);

const bar = (items: [string, number, boolean?][]) =>
  items.map(([n, w, on], i) =>
    n === '.' ? <MoreTool key={i} $w={w} aria-label="More" /> : <Tool key={i} $w={w} $on={on} aria-label={n}><Icon n={n} s={w < 11 ? 3 : 11} /></Tool>
  );
const tools = (items: [string, boolean][]) =>
  items.map(([n, on], i) => <Tool key={i} $on={on} aria-label={n}><Icon n={n} s={11} /></Tool>);

const FEATURES = [['plane', 'Front'], ['plane', 'Top'], ['plane', 'Right'], ['origin', 'Origin']];

export default function App() {
  return (
    <Shell>
      <Global />
      <TitleBar>
        <QuickAccess>{QUICK.map((n, i) => <button key={i} aria-label={n}><Icon n={n} /></button>)}</QuickAccess>
        <Title>Geomagic Design X 2022, 0, 0</Title>
        <WindowButtons>
          <button aria-label="Minimize"><Icon n="min" s={6} /></button>
          <button aria-label="Restore"><Icon n="restore" s={6} /></button>
          <button aria-label="Close"><Icon n="thinClose" s={6} /></button>
        </WindowButtons>
      </TitleBar>
      <TabStrip>
        <Tab $kind="menu" $w={30}>MENU</Tab>
        {TABS.map(([t, w]) => <Tab key={t} $w={w} $kind={t === 'POLYGONS' ? 'active' : undefined}>{t}</Tab>)}
      </TabStrip>
      <Ribbon>
        <Group $w={39}>
          <GroupBody><Big n="scan" a="Run Scan" b="Process ▾" w={36} /></GroupBody>
          <GroupLabel>Scan Process</GroupLabel>
        </Group>
        <Group $w={86}>
          <GroupBody>
            <Big n="buildup" a="Mesh Buildup" b="Wizard" w={38} />
            <Big n="healing" a="Healing" b="Wizard" w={22} />
            <Big n="brush" a="Smart" b="Brush" w={22} />
          </GroupBody>
          <GroupLabel>Wizard</GroupLabel>
        </Group>
        <Group $w={56}>
          <GroupBody><Big n="merge" a="Merge" w={23} disabled /><Big n="combine" a="Combine" w={25} disabled /></GroupBody>
          <GroupLabel>Merge/Combine</GroupLabel>
        </Group>
        <Group $w={56}>
          <GroupBody>
            <Stack $w={54}><Small n="fill" label="Fill Holes" /><Small n="defeature" label="Defeature" /><Small n="markers" label="Remove Markers" /></Stack>
          </GroupBody>
          <GroupLabel>Repair Holes/Boss</GroupLabel>
        </Group>
        <Group $w={95}>
          <GroupBody>
            <Big n="enhance" a="Enhance" b="Shape" w={26} />
            <Big n="optimize" a="Optimize" b="Mesh ▾" w={27} />
            <Stack $w={37}><Small n="decimate" label="Decimate" /><Small n="subdivide" label="Subdivide" /><Small n="smooth" label="Smooth" /></Stack>
          </GroupBody>
          <GroupLabel>Optimize</GroupLabel>
        </Group>
        <Group $w={223}>
          <GroupBody>
            <Stack $w={53}><Small n="split" label="Split" /><Small n="editB" label="Edit Boundaries" /><Small n="offset" label="Offset" /></Stack>
            <Stack $w={54}><Small n="trim" label="Trim" /><Small n="sew" label="Sew Boundaries" /><Small n="thicken" label="Thicken" /></Stack>
            <Stack $w={57}><Small n="fix" label="Fix Normal" /><Small n="convert" label="Convert To Mesh" disabled /><Small n="texture" label="Add Texture" /></Stack>
            <Stack $w={52}><Small n="unroll" label="Unroll/Roll Scan" /><Small n="separate" label="Separate Mesh" /></Stack>
          </GroupBody>
          <GroupLabel>Edit</GroupLabel>
        </Group>
        <Group $w={55}>
          <GroupBody>
            <Nav>
              <Picker $w={38}><select disabled aria-label="Navigation target"><option /></select></Picker>
              <NavRow>
                <NavButton $w={13} disabled>&lt; &lt;</NavButton><NavButton $w={22} disabled>Select</NavButton><NavButton $w={13} disabled>&gt; &gt;</NavButton>
              </NavRow>
            </Nav>
          </GroupBody>
          <GroupLabel>Navigation</GroupLabel>
        </Group>
      </Ribbon>
      <Work>
        <Dock $w={160}>
          <DockTitle><DockName>Tree</DockName><Icon n="pin" s={6} /><Icon n="close" s={5} /></DockTitle>
          <DockTabs>
            <DockTab $on $w={24}><Icon n="tree" />Tree</DockTab>
            <DockTab $w={28}><Icon n="help" />Help</DockTab>
            <DockTab $w={40}><Icon n="view" />Viewpoint</DockTab>
          </DockTabs>
          <TreeSection>
            <TreeHead>Feature</TreeHead>
            <List>
              {FEATURES.map(([n, t]) => <Row key={t} $in={11}><Icon n={n} />{t}</Row>)}
              <Row $in={10}><Icon n="dot" s={7} /><Icon n="mesh" s={10} />Yamaha front</Row>
            </List>
          </TreeSection>
          <TreeSection>
            <TreeHead>Model</TreeHead>
            <List>
              <Row $in={1} $bold><Icon n="block" s={7} /><Icon n="blank" s={2} />Default</Row>
              <Row $in={1} $bold><Icon n="minus" s={8} /><Icon n="checkEye" s={8} /><Icon n="mesh" />Meshes</Row>
              <Row $in={10}><Icon n="plus" s={8} /><Icon n="checkEye" s={8} /><Icon n="meshBlue" /><Selected>Yamaha front</Selected></Row>
              <Row $in={1} $bold><Icon n="plus" s={8} /><Icon n="check" s={8} /><Icon n="plane" />Ref. Planes</Row>
              <Row $in={1} $bold><Icon n="plus" s={8} /><Icon n="check" s={8} /><Icon n="origin" />Ref. Coordinates</Row>
            </List>
          </TreeSection>
        </Dock>
        <Centre>
          <Viewport>
            <Part />
            <FloatBar>{bar(FLOAT)}</FloatBar>
            <Corner />
            <Scale><ScaleBar />25 mm</Scale>
          </Viewport>
          <ViewTabs>
            <Icon n="left" s={6} />
            <ViewTab>Model View</ViewTab>
            <Spacer />
            <Icon n="right" s={6} /><Icon n="thinClose" s={6} /><Icon n="disc" s={6} /><Icon n="down" s={6} />
          </ViewTabs>
        </Centre>
        <Dock $w={127}>
          <DockTitle><DockName>Properties</DockName><Icon n="pin" s={6} /><Icon n="close" s={5} /></DockTitle>
          <DockTabs>
            <DockTab $on $w={40}><Icon n="props" />Properties</DockTab>
            <DockTab $w={33}><Icon n="display" />Display</DockTab>
            <DockTab $w={52}><Icon n="accuracy" />Accuracy Anal...</DockTab>
          </DockTabs>
          <PropsBar>
            <Tool $on aria-label="Categories"><Icon n="categories" s={10} /></Tool>
            <Tool $w={10} aria-label="Sort"><Icon n="sort" s={9} /></Tool>
            <PropName>Name:</PropName>
          </PropsBar>
          <PropTable><thead><tr><th>Name</th><th>Properties</th></tr></thead></PropTable>
        </Dock>
      </Work>
      <Status>
        <StatusSet $w={99}>
          <Icon n="filter" s={12} />
          <Picker $w={21}><select aria-label="Filter mode"><option>Auto</option></select></Picker>
          <Picker $w={21}><select aria-label="Filter range"><option>Auto</option></select></Picker>
        </StatusSet>
        <Tools $w={190}>{tools(SHOW)}<MoreTool $w={5} aria-label="More" /></Tools>
        <Tools $w={197}>{tools(PICK)}<Tool $w={4} aria-label="Gap" /><Tool aria-label="copy"><Icon n="copyCur" s={11} /></Tool><MoreTool $w={5} aria-label="More" /></Tools>
        <Tools $w={80}>
          {['dist', 'angle', 'radius', 'section', 'ring'].map((n) => <Tool key={n} aria-label={n}><Icon n={n} s={10} /></Tool>)}
          <MoreTool $w={5} aria-label="More" />
        </Tools>
      </Status>
    </Shell>
  );
}
